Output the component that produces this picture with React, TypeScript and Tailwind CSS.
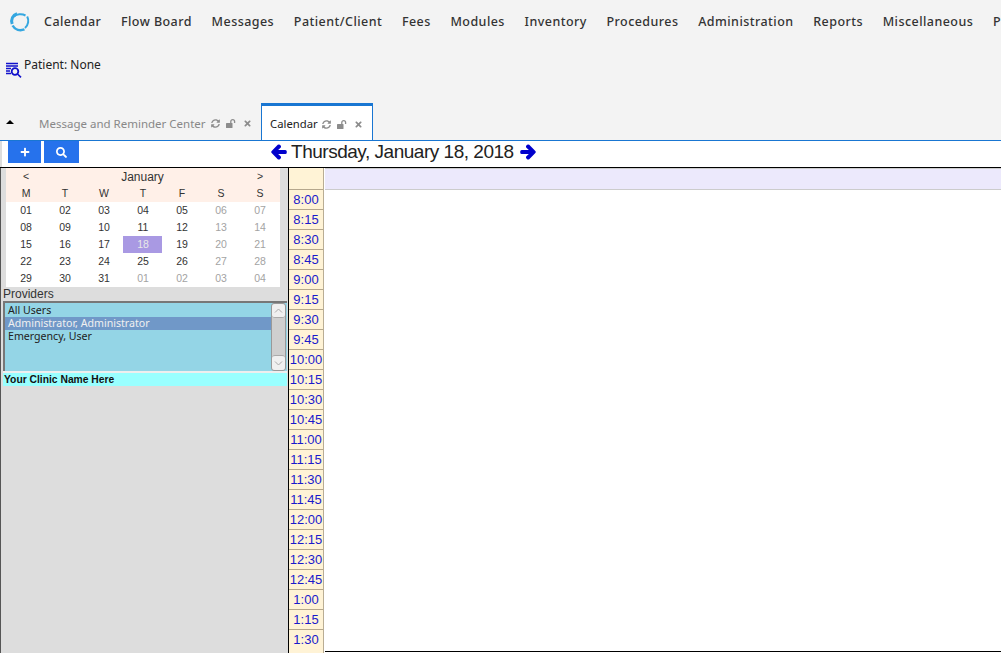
import { FaArrowLeft, FaArrowRight, FaPlus, FaSearch, FaSyncAlt, FaTimes } from "react-icons/fa";

const menu = ["Calendar", "Flow Board", "Messages", "Patient/Client", "Fees", "Modules", "Inventory", "Procedures", "Administration", "Reports", "Miscellaneous", "Popups"];
const times = ["8:00", "8:15", "8:30", "8:45", "9:00", "9:15", "9:30", "9:45", "10:00", "10:15", "10:30", "10:45", "11:00", "11:15", "11:30", "11:45", "12:00", "12:15", "12:30", "12:45", "1:00", "1:15", "1:30"];
const dow = ["M", "T", "W", "T", "F", "S", "S"];
const weeks = [
  ["01", "02", "03", "04", "05", "06", "07"],
  ["08", "09", "10", "11", "12", "13", "14"],
  ["15", "16", "17", "18", "19", "20", "21"],
  ["22", "23", "24", "25", "26", "27", "28"],
  ["29", "30", "31", "01", "02", "03", "04"],
];

// tab refresh / lock / close icons
const TabIcons = () => (
  <div className="flex items-center gap-[6.5px] shrink-0 text-[#8c8c8c]">
    <FaSyncAlt className="w-[9px] h-[9px] shrink-0" />
    <svg width="10" height="9" viewBox="0 0 10 9" fill="none" className="shrink-0">
      <rect x="0" y="4" width="6.5" height="5" rx="0.6" fill="#8c8c8c" />
      <path d="M4.8 4V2.6a1.9 1.9 0 0 1 3.8 0V4" stroke="#8c8c8c" strokeWidth="1.3" />
    </svg>
    <FaTimes className="w-[9px] h-[9px] shrink-0" />
  </div>
);

const Logo = () => (
  <svg width="22" height="22" viewBox="0 0 22 22" fill="none" className="shrink-0">
    <path d="M8 2.8C3.8 4 1.6 8.6 3.2 13" stroke="#35a7e0" strokeWidth="3" />
    <path d="M5 5.5C7.5 3 13 2.6 16.5 4.5" stroke="#35a7e0" strokeWidth="2" />
    <path d="M18.2 5.5C20 9 19.6 14 16 17" stroke="#35a7e0" strokeWidth="2" />
    <path d="M3.6 14.5C6 19 11 20 15.5 18.4" stroke="#35a7e0" strokeWidth="2.6" />
  </svg>
);

const PatientIcon = () => (
  <svg width="16" height="16" viewBox="0 0 16 16" className="mt-[6px] ml-[1px] shrink-0">
    <path d="M0 1.5H12M0 4H12M0 6.5H5M0 9H4M0 11.5H5" stroke="#1111cc" strokeWidth="1.7" />
    <circle cx="9" cy="9.5" r="3.3" fill="#f3f3f3" stroke="#1111cc" strokeWidth="1.8" />
    <path d="M11.5 12L15 15.4" stroke="#1111cc" strokeWidth="1.6" />
  </svg>
);

export default function App() {
  return (
    <div className="h-screen w-full overflow-hidden flex flex-col bg-white font-[Liberation_Sans,sans-serif]">
      {/* top area */}
      <div className="h-[141px] shrink-0 flex flex-col bg-[#f3f3f3] border-b border-[#1976d2] font-[Noto_Sans,sans-serif]">
        <div className="h-[45px] flex items-center pl-[9px] whitespace-nowrap overflow-hidden">
          <Logo />
          <div className="flex gap-[19.7px] ml-[13px] text-[12.5px] font-medium tracking-[0.45px] text-[#333]">
            {menu.map((m) => (
              <span key={m}>{m}</span>
            ))}
          </div>
        </div>
        <div className="h-[59px] flex items-start pl-[5px] pt-[11px] gap-[2px] text-[12px] text-[#222]">
          <PatientIcon />
          <span className="leading-[18px]">Patient: None</span>
        </div>
        <div className="h-[37px] flex items-stretch">
          <div className="w-[39px] flex items-center pl-[6px]">
            <div className="w-0 h-0 border-x-[4px] border-x-transparent border-b-[4px] border-b-black" />
          </div>
          <div className="w-[222px] flex items-center pt-[4px] gap-[5px] whitespace-nowrap text-[11.5px] text-[#888]">
            <span>Message and Reminder Center</span>
            <TabIcons />
          </div>
          <div className="w-[112px] h-[37px] relative z-10 flex items-center pl-[8px] pt-[2px] gap-[4px] whitespace-nowrap bg-white border-x border-[#1976d2] border-t-[3px] text-[11.3px] text-[#222]">
            <span>Calendar</span>
            <TabIcons />
          </div>
        </div>
      </div>

      {/* date bar */}
      <div className="h-[26px] shrink-0 flex border-l-2 border-[#ddd]">
        <div className="w-[269px] flex items-start pl-[6px] gap-[3px]">
          <div className="w-[33px] h-[22px] bg-[#2672ec] flex items-center justify-center text-white">
            <FaPlus className="w-[10px] h-[10px]" />
          </div>
          <div className="w-[35px] h-[22px] bg-[#2672ec] flex items-center justify-center text-white">
            <FaSearch className="w-[11px] h-[11px]" />
          </div>
        </div>
        <div className="flex items-center gap-[4px] text-[19px] tracking-[-0.48px] text-[#222] pb-[4px]">
          <FaArrowLeft className="w-[16px] h-[16px] text-[#0000cc] stroke-[#0000cc] stroke-[50]" />
          <span>Thursday, January 18, 2018</span>
          <FaArrowRight className="w-[16px] h-[16px] text-[#0000cc] stroke-[#0000cc] stroke-[50] ml-[2px]" />
        </div>
      </div>

      {/* main */}
      <div className="flex-1 min-h-0 flex border-t border-black">
        <div className="w-[288px] shrink-0 bg-[#dddddd] border-l border-[#555] pl-[2px] pr-[1px]">
          <div className="ml-[3px] w-[274px] text-[10.5px] text-[#333]">
            <div className="bg-[#fff0e8] grid grid-cols-[repeat(7,39px)] text-center">
              <span className="h-[17px] leading-[17px] pl-[1px]">&lt;</span>
              <span className="col-span-5 h-[17px] leading-[19px] text-[12px]">January</span>
              <span className="h-[17px] leading-[17px] pl-[1px]">&gt;</span>
              {dow.map((d, i) => (
                <span key={i} className="h-[17px] leading-[17px] pl-[1px]">{d}</span>
              ))}
            </div>
            <div className="bg-white grid grid-cols-[repeat(7,39px)] text-center">
              {weeks.map((week, w) =>
                week.map((d, i) => {
                  const muted = i > 4 || (w === 4 && i > 2);
                  const today = w === 2 && i === 3;
                  return (
                    <span
                      key={w + "-" + i}
                      className={
                        "h-[17px] leading-[17px] pl-[1px] " +
                        (today ? "bg-[#a999e3] text-[#e8e8e8]" : muted ? "text-[#a3a3a3]" : "")
                      }
                    >
                      {d}
                    </span>
                  );
                }),
              )}
            </div>
          </div>
          <div className="h-[14px] leading-[14px] text-[12px] text-[#333]">Providers</div>
          <div className="h-[70px] flex border-t-2 border-l-2 border-[#777] bg-[#94d5e6] text-[10.6px] text-[#222] font-[Noto_Sans,sans-serif]">
            <div className="flex-1 min-w-0">
              <div className="h-[13px] leading-[13px] pl-[3px] mt-[1px]">All Users</div>
              <div className="h-[13px] leading-[13px] pl-[3px] bg-[#7098c8] text-[#f0f0f0]">Administrator, Administrator</div>
              <div className="h-[13px] leading-[13px] pl-[3px]">Emergency, User</div>
            </div>
            <div className="w-[15px] mr-[1px] bg-[#cfcfcf] rounded-[3px] flex flex-col justify-between border border-[#999]">
              <div className="h-[14px] bg-[#f0f0f0] border-b border-[#aaa] rounded-[3px] flex items-center justify-center">
                <svg width="9" height="5" viewBox="0 0 9 5" fill="none"><path d="M1 4.5L4.5 1L8 4.5" stroke="#aaa" /></svg>
              </div>
              <div className="h-[15px] bg-[#f0f0f0] border-t border-[#aaa] rounded-[3px] flex items-center justify-center">
                <svg width="9" height="5" viewBox="0 0 9 5" fill="none"><path d="M1 .5L4.5 4L8 .5" stroke="#aaa" /></svg>
              </div>
            </div>
          </div>
          <div className="h-[15px] leading-[13px] border-t-2 border-[#eeeeee] bg-[#99ffff] text-[10.3px] font-bold text-[#111] pl-[1px]">Your Clinic Name Here</div>
        </div>

        {/* time column */}
        <div className="w-[36px] shrink-0 border-l border-black border-r border-r-[#b9ad94] bg-[#fff3d6] pt-[21px] overflow-hidden">
          {times.map((t) => (
            <div key={t} className="h-[20px] border-t border-[#b5a78c] text-center text-[13px] leading-[19px] text-[#1a1acc] whitespace-nowrap">
              {t}
            </div>
          ))}
        </div>

        {/* day column */}
        <div className="flex-1 min-w-0 pl-[1px] flex flex-col">
          <div className="h-[22px] shrink-0 bg-[#ece9fc] border-b border-[#ccc] border-t border-t-[#ccc]" />
          <div className="flex-1 border-b border-black mb-[1px]" />
        </div>
      </div>
    </div>
  );
}
